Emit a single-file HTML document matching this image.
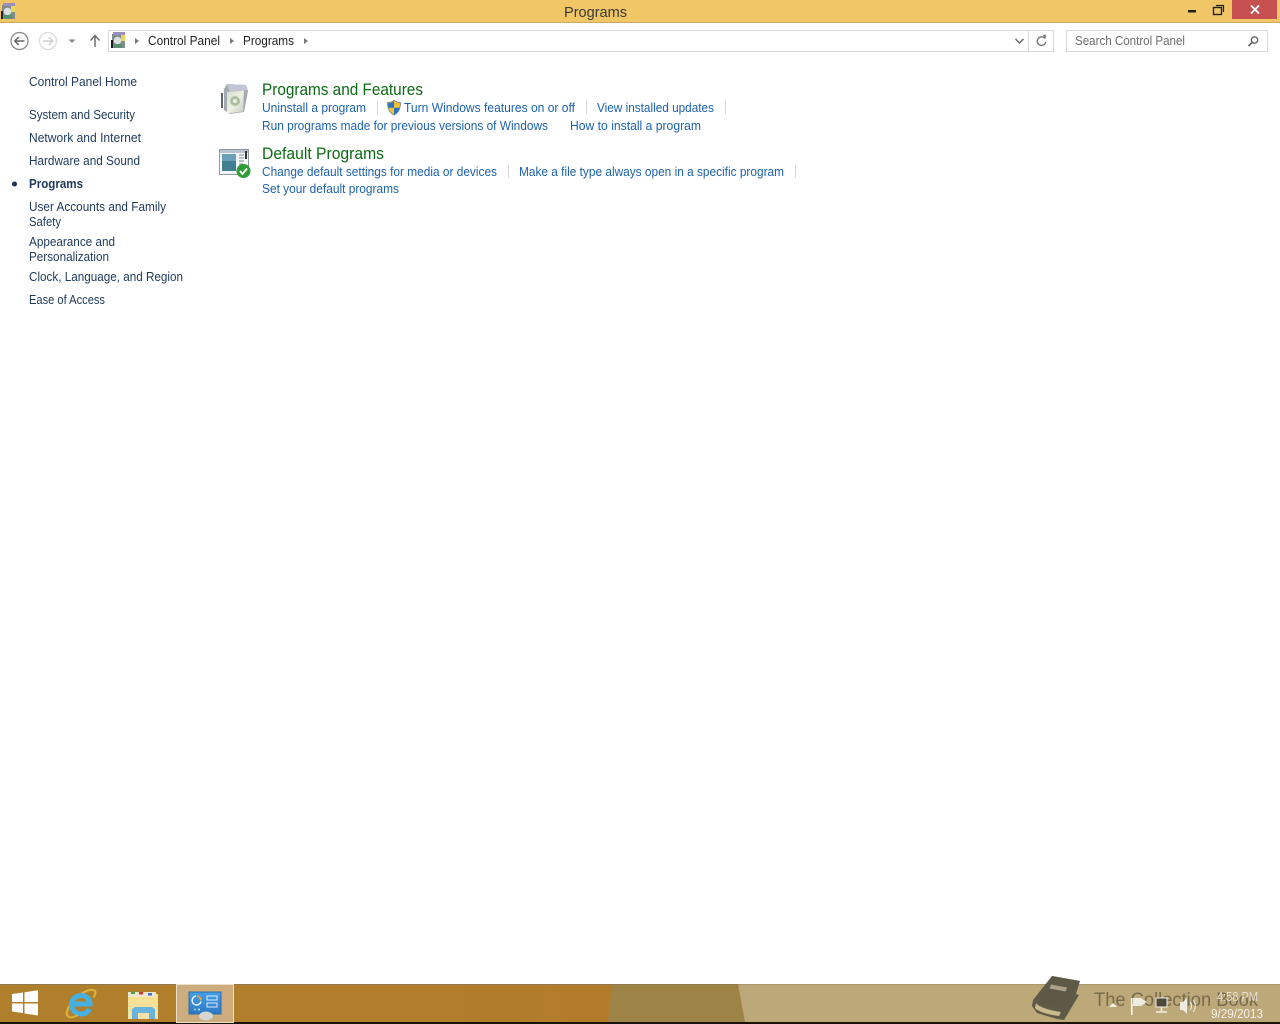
<!DOCTYPE html>
<html lang="en">
<head>
<meta charset="utf-8">
<title>Programs</title>
<style>
html,body{margin:0;padding:0;width:1280px;height:1024px;overflow:hidden;background:#fff}
svg{display:block;position:absolute;left:0;top:0}
text{font-family:"Liberation Sans",sans-serif;font-size:12.5px}
.nav{fill:#1e395b}
.lnk{fill:#1c62ad}
.hd{fill:#0b6a12;font-size:16.5px}
</style>
</head>
<body>
<svg width="1280" height="1024" viewBox="0 0 1280 1024" xmlns="http://www.w3.org/2000/svg">
<defs>
<linearGradient id="tb" x1="0" y1="0" x2="1" y2="0">
<stop offset="0" stop-color="#b07f2c"/><stop offset=".3" stop-color="#b27e2b"/><stop offset=".7" stop-color="#b47a2c"/><stop offset="1" stop-color="#b3742c"/>
</linearGradient>
<linearGradient id="scr" x1="0" y1="0" x2="0" y2="1"><stop offset="0" stop-color="#45a0e6"/><stop offset="1" stop-color="#2f78c4"/></linearGradient>
<linearGradient id="fold" x1="0" y1="0" x2="0" y2="1"><stop offset="0" stop-color="#f8e08c"/><stop offset="1" stop-color="#f3e3ad"/></linearGradient>
<linearGradient id="box" x1="0" y1="0" x2="1" y2="1"><stop offset="0" stop-color="#cfe0c8"/><stop offset=".5" stop-color="#eef0e4"/><stop offset="1" stop-color="#c4ccc0"/></linearGradient>
<g id="cpico">
<rect x="2" y="2" width="13" height="14" fill="#7f8d8e"/>
<rect x="3" y="0" width="12" height="3" fill="#9a8fc0"/>
<rect x="11" y="3" width="4" height="6" fill="#e8d85c"/>
<circle cx="7.500" cy="8.500" r="3.800" fill="#d9e0de"/>
<rect x="4" y="12" width="8" height="3.500" fill="#4f8f6c"/>
<rect x="1" y="8" width="2" height="8" fill="#1c1c1c"/>
</g>
</defs>

<!-- title bar -->
<rect x="0" y="0" width="1280" height="22" fill="#f0c667"/>
<rect x="0" y="22" width="1280" height="1" fill="#c9ab66"/>
<use href="#cpico" x="0" y="3"/>
<text x="564" y="17" style="font-size:14.5px" fill="#3a3a3a" textLength="63" lengthAdjust="spacingAndGlyphs">Programs</text>
<rect x="1188" y="10" width="8" height="2.500" fill="#222"/>
<rect x="1213.500" y="7.500" width="8" height="7" fill="none" stroke="#222" stroke-width="1.400"/>
<path d="M1216 5.500h7.500v6.500" fill="none" stroke="#222" stroke-width="1.200"/>
<rect x="1232" y="0" width="45" height="19" fill="#c75050"/>
<path d="M1251 5.500l8 8M1259 5.500l-8 8" stroke="#fff" stroke-width="1.900"/>

<!-- nav buttons -->
<circle cx="19.500" cy="41" r="8.500" fill="none" stroke="#8a8a8a" stroke-width="1.300"/>
<path d="M24.500 41h-9.500M18.800 37l-4 4 4 4" fill="none" stroke="#666" stroke-width="1.500"/>
<circle cx="48" cy="41" r="8.500" fill="none" stroke="#dcdcdc" stroke-width="1.300"/>
<path d="M43 41h9.500M48.700 37l4 4-4 4" fill="none" stroke="#cfcfcf" stroke-width="1.500"/>
<path d="M68.500 39.500h7l-3.500 3.500z" fill="#8a8a8a"/>
<path d="M95 47V36M90.500 40.500L95 35.500l4.500 5" fill="none" stroke="#666" stroke-width="1.400"/>

<!-- address bar -->
<rect x="108.500" y="30.500" width="945" height="21" fill="#fff" stroke="#dadada"/>
<rect x="1028" y="31" width="1" height="20" fill="#dadada"/>
<use href="#cpico" x="110" y="32"/>
<path d="M135 38l4 3-4 3z" fill="#777"/>
<text x="148" y="45" fill="#222" textLength="72" lengthAdjust="spacingAndGlyphs">Control Panel</text>
<path d="M230 38l4 3-4 3z" fill="#777"/>
<text x="243" y="45" fill="#222" textLength="51" lengthAdjust="spacingAndGlyphs">Programs</text>
<path d="M304 38l4 3-4 3z" fill="#777"/>
<path d="M1015.500 39l4 4 4-4" fill="none" stroke="#666" stroke-width="1.500"/>
<path d="M1045 38.500a4.300 4.300 0 1 0 .8 3.500" fill="none" stroke="#777" stroke-width="1.400"/>
<path d="M1042.500 34.800l3.300 0 0 3.800z" fill="#777"/>
<rect x="1066.500" y="30.500" width="201" height="21" fill="#fff" stroke="#dadada"/>
<text x="1075" y="45" fill="#6d6d6d" textLength="110" lengthAdjust="spacingAndGlyphs">Search Control Panel</text>
<circle cx="1254.500" cy="40" r="3.200" fill="none" stroke="#666" stroke-width="1.400"/>
<path d="M1252 42.500l-3.500 3.500" stroke="#666" stroke-width="1.800"/>

<!-- left nav -->
<text class="nav" x="29" y="86" textLength="108" lengthAdjust="spacingAndGlyphs">Control Panel Home</text>
<text class="nav" x="29" y="119" textLength="106" lengthAdjust="spacingAndGlyphs">System and Security</text>
<text class="nav" x="29" y="142" textLength="112" lengthAdjust="spacingAndGlyphs">Network and Internet</text>
<text class="nav" x="29" y="165" textLength="111" lengthAdjust="spacingAndGlyphs">Hardware and Sound</text>
<circle cx="14.500" cy="184" r="2.500" fill="#1e2f5b"/>
<text class="nav" x="29" y="188" font-weight="bold" textLength="54" lengthAdjust="spacingAndGlyphs">Programs</text>
<text class="nav" x="29" y="211" textLength="137" lengthAdjust="spacingAndGlyphs">User Accounts and Family</text>
<text class="nav" x="29" y="226" textLength="32" lengthAdjust="spacingAndGlyphs">Safety</text>
<text class="nav" x="29" y="246" textLength="86" lengthAdjust="spacingAndGlyphs">Appearance and</text>
<text class="nav" x="29" y="261" textLength="80" lengthAdjust="spacingAndGlyphs">Personalization</text>
<text class="nav" x="29" y="281" textLength="154" lengthAdjust="spacingAndGlyphs">Clock, Language, and Region</text>
<text class="nav" x="29" y="304" textLength="76" lengthAdjust="spacingAndGlyphs">Ease of Access</text>

<!-- programs icon -->
<path d="M224 89l3-5 19 1 2 6-4 21-14 2-6-4z" fill="#a4aab2"/>
<path d="M227 84l19 1 1.500 5-18 1.500z" fill="#c3c6d6"/>
<path d="M227 92l17-1.500-1 21-16 2z" fill="url(#box)"/>
<circle cx="235" cy="101" r="5" fill="#aebf9f"/>
<circle cx="235" cy="101" r="2" fill="#eef0e8"/>
<rect x="221" y="93" width="2" height="15" fill="#5f666c"/>

<!-- default programs icon -->
<rect x="219.500" y="149.500" width="29" height="25" fill="#f5f7f9" stroke="#8e98a2"/>
<rect x="220" y="150" width="28" height="3" fill="#b8c4d0"/>
<rect x="222" y="154" width="14" height="17" fill="#3f7f8f"/>
<rect x="222" y="154" width="14" height="7" fill="#6aa0b5"/>
<path d="M239 155h5M239 158h5M239 161h5M239 164h4" stroke="#7f8b97" stroke-width="1"/>
<rect x="245" y="151" width="2" height="8" fill="#333"/>
<circle cx="243.500" cy="171" r="7" fill="#2f9e35"/>
<path d="M240 171l2.500 3 4.500-5.500" fill="none" stroke="#fff" stroke-width="1.800"/>

<!-- content -->
<text class="hd" x="262" y="95" textLength="161" lengthAdjust="spacingAndGlyphs">Programs and Features</text>
<text class="lnk" x="262" y="112" textLength="104" lengthAdjust="spacingAndGlyphs">Uninstall a program</text>
<rect x="377" y="101" width="1" height="13" fill="#d6d6d6"/>
<path d="M394 100.500c2 1.500 4 2 6.500 2 0 5.500-1.500 10-6.500 12.500-5-2.500-6.500-7-6.500-12.500 2.500 0 4.500-.5 6.500-2z" fill="#f3c42e" stroke="#6f7f8f" stroke-width=".8"/>
<path d="M394 101.500v6.300h-5.800c0-1.300-.2-2.800-.2-4.600 2.200 0 4.200-.6 6-1.700z" fill="#2f72c4"/>
<path d="M394 107.800h5.800c-.5 3-2.500 5.500-5.800 7z" fill="#2f72c4"/>
<text class="lnk" x="404" y="112" textLength="171" lengthAdjust="spacingAndGlyphs">Turn Windows features on or off</text>
<rect x="586" y="101" width="1" height="13" fill="#d6d6d6"/>
<text class="lnk" x="597" y="112" textLength="117" lengthAdjust="spacingAndGlyphs">View installed updates</text>
<rect x="725" y="101" width="1" height="13" fill="#d6d6d6"/>
<text class="lnk" x="262" y="130" textLength="286" lengthAdjust="spacingAndGlyphs">Run programs made for previous versions of Windows</text>
<text class="lnk" x="570" y="130" textLength="131" lengthAdjust="spacingAndGlyphs">How to install a program</text>

<text class="hd" x="262" y="159" textLength="122" lengthAdjust="spacingAndGlyphs">Default Programs</text>
<text class="lnk" x="262" y="176" textLength="235" lengthAdjust="spacingAndGlyphs">Change default settings for media or devices</text>
<rect x="508" y="165" width="1" height="13" fill="#d6d6d6"/>
<text class="lnk" x="519" y="176" textLength="265" lengthAdjust="spacingAndGlyphs">Make a file type always open in a specific program</text>
<rect x="795" y="165" width="1" height="13" fill="#d6d6d6"/>
<text class="lnk" x="262" y="193" textLength="137" lengthAdjust="spacingAndGlyphs">Set your default programs</text>

<!-- taskbar -->
<rect x="0" y="984" width="1280" height="38" fill="url(#tb)"/>
<path d="M612 984H738L745 1022H608z" fill="#9e8347"/>
<path d="M738 984H1280V1022H745z" fill="#bca878"/>
<rect x="0" y="984" width="1280" height="1" fill="#8e7a4c"/>
<rect x="738" y="984" width="542" height="1" fill="#a8986c"/>
<rect x="0" y="1022" width="1280" height="2" fill="#1a1308"/>

<!-- start -->
<path d="M12 994l11-1.500V1002H12zM24.500 992.300L38 990.300V1002H24.500zM12 1003.500h11v9.500l-11-1.500zM24.500 1003.500H38V1015.500L24.500 1013.500z" fill="#fff"/>

<!-- IE -->
<path d="M69 1017c-5-2-1-12 8-20 7-6 15-9 18-6 1 1.500 0 4-1.500 6.500" fill="none" stroke="#dcb23a" stroke-width="2.200"/>
<path d="M72 1004h18c0-5-4-8.500-9-8.500s-9.500 4-9.500 9 4 9.500 9.500 9.500c4 0 7-2 8.500-5" fill="none" stroke="#45b0e4" stroke-width="5"/>
<path d="M71 1002.500h21v4H71z" fill="#45b0e4"/>
<path d="M69 1017c2 1 5 0 9-2" fill="none" stroke="#dcb23a" stroke-width="2"/>

<!-- explorer -->
<rect x="128" y="994" width="30" height="25" fill="url(#fold)"/>
<rect x="128" y="992" width="28" height="5" fill="#ede7cf"/>
<rect x="131" y="991.500" width="4" height="2.500" fill="#4aa14a"/>
<rect x="139" y="992" width="4" height="2.500" fill="#cc3b3b"/>
<rect x="148" y="993" width="4" height="2.500" fill="#3d73c8"/>
<path d="M132 1019v-10l3-2h17l3 2v10h-6v-6h-11v6z" fill="#69b3dc"/>

<!-- control panel (active) -->
<rect x="176.500" y="984.500" width="57" height="38" fill="#cdad7e" stroke="#e9dfcb"/>
<rect x="189" y="992" width="32" height="22" fill="url(#scr)" stroke="#2c6aa8"/>
<path d="M197 996a4.500 4.500 0 0 1 4 4.500" fill="none" stroke="#eda040" stroke-width="1.800"/>
<path d="M201 1001.500a4.500 4.500 0 1 1-5-5.500" fill="none" stroke="#e8f2fa" stroke-width="1.500"/>
<rect x="207" y="996" width="10" height="4" fill="none" stroke="#dbe9f7"/>
<rect x="207" y="1003" width="10" height="4" fill="none" stroke="#dbe9f7"/>
<circle cx="195" cy="1009.500" r="1" fill="#8fe0b0"/>
<circle cx="199" cy="1009.500" r="1" fill="#dbe9f7"/>
<ellipse cx="206" cy="1016" rx="7" ry="4.500" fill="#d8d6d2"/>

<!-- watermark book -->
<path d="M1052 976L1080 981L1076 994L1079 995L1064 1020L1057 1019L1037 1013L1032 1006L1033 1000z" fill="#5f5a48"/>
<path d="M1052 976L1080 981L1067 1009L1040 1001z" fill="#5e5947"/>
<path d="M1036 1003C1038 1007 1052 1011 1061 1012L1059 1016C1050 1015 1038 1012 1035 1008z" fill="#c9b98c"/>
<path d="M1051 984.500l16 3-1.500 4-16-3z" fill="#aca08a"/>
<text x="1094" y="1006" style="font-size:19px" fill="#675d46" fill-opacity=".8" textLength="164" lengthAdjust="spacingAndGlyphs">The Collection Book</text>

<!-- tray -->
<path d="M1109 1007l4-4 4 4z" fill="#f3f0e6"/>
<rect x="1131" y="998" width="1.500" height="17" fill="#fff"/>
<path d="M1133 998h8l6 4-6 4h-8z" fill="#f1efe6" fill-opacity=".95"/>
<rect x="1156" y="998" width="11" height="9" fill="#4b4a3a" stroke="#f1efe6"/>
<path d="M1161.500 1007v4M1156 1012h11" stroke="#f1efe6" stroke-width="1.600"/>
<path d="M1180 1002h3l4-4v16l-4-4h-3z" fill="#eeece2"/>
<path d="M1190 1002c2 2 2 6 0 8M1193 1000c3 3 3 9 0 12" fill="none" stroke="#eeece2" stroke-width="1"/>
<text x="1217" y="1001" fill="#e8e2d2" textLength="41" lengthAdjust="spacingAndGlyphs">4:58 PM</text>
<text x="1211" y="1018" fill="#f4f1e8" textLength="52" lengthAdjust="spacingAndGlyphs">9/29/2013</text>
</svg>
</body>
</html>
